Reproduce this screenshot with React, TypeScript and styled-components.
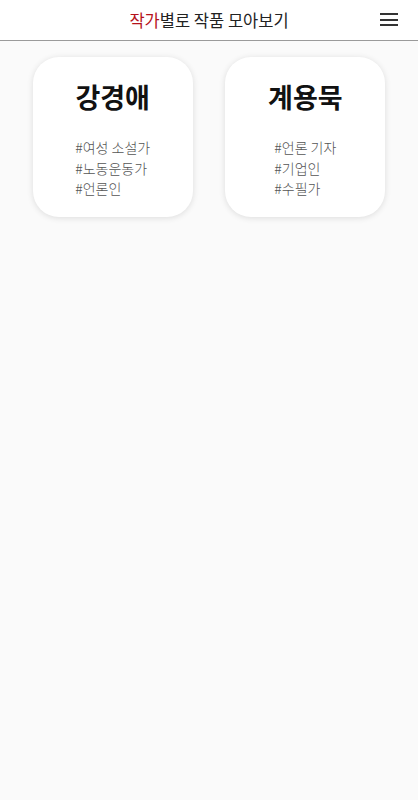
import styled, { createGlobalStyle } from "styled-components";

const GlobalStyle = createGlobalStyle`
    html, body {
        margin: 0;
        padding: 0;
        background: #fafafa;
        font-family: "Noto Sans CJK KR", "Noto Sans", sans-serif;
    }
    #root {
        min-height: 100vh;
        background: #fafafa;
    }
`;

const HeaderBar = styled.header`
    height: 40px;
    background: white;
    border-bottom: 1px solid #9a9a9a;
    display: flex;
    align-items: center;
    justify-content: center;
    position: relative;
`;

const TitleH1 = styled.h1`
    margin: 0;
    font-size: 16.5px;
    font-weight: 400;
    color: #222;
`;

const RedSpan = styled.span`
    color: #b5121b;
`;

const MenuButton = styled.button`
    position: absolute;
    right: 20px;
    top: 13px;
    width: 18px;
    height: 13px;
    padding: 0;
    border: none;
    background: transparent;
    display: flex;
    flex-direction: column;
    justify-content: space-between;
    cursor: pointer;
`;

const MenuLine = styled.span`
    display: block;
    height: 2px;
    width: 100%;
    background: #333;
`;

const CardWrapperDiv = styled.main`
    display: flex;
    flex-flow: row wrap;
    justify-content: space-evenly;
    padding-top: 16px;
`;

const CardDiv = styled.div`
    width: 160px;
    height: 160px;
    box-sizing: border-box;
    background: white;
    border-radius: 26px;
    box-shadow: 0 1px 6px rgba(0, 0, 0, 0.12);
    display: flex;
    flex-direction: column;
    align-items: center;
    padding-top: 20px;
`;

const NameP = styled.p`
    margin: 0;
    font-size: 27px;
    font-weight: 700;
    color: #111;
    line-height: 40px;
`;

const TagList = styled.ul`
    list-style: none;
    margin: 20px 0 0;
    padding: 0;
    text-align: left;
`;

const TagItem = styled.li`
    font-size: 14px;
    font-weight: 300;
    line-height: 20.5px;
    color: #555;
`;

const writers = [
    { name: "강경애", tags: ["여성 소설가", "노동운동가", "언론인"] },
    { name: "계용묵", tags: ["언론 기자", "기업인", "수필가"] },
];

export default function App() {
    return (
        <>
            <GlobalStyle />
            <HeaderBar>
                <TitleH1>
                    <RedSpan>작가</RedSpan>별로 작품 모아보기
                </TitleH1>
                <MenuButton aria-label="menu">
                    <MenuLine />
                    <MenuLine />
                    <MenuLine />
                </MenuButton>
            </HeaderBar>
            <CardWrapperDiv>
                {writers.map((w) => (
                    <CardDiv key={w.name}>
                        <NameP>{w.name}</NameP>
                        <TagList>
                            {w.tags.map((t) => (
                                <TagItem key={t}>#{t}</TagItem>
                            ))}
                        </TagList>
                    </CardDiv>
                ))}
            </CardWrapperDiv>
        </>
    );
}
